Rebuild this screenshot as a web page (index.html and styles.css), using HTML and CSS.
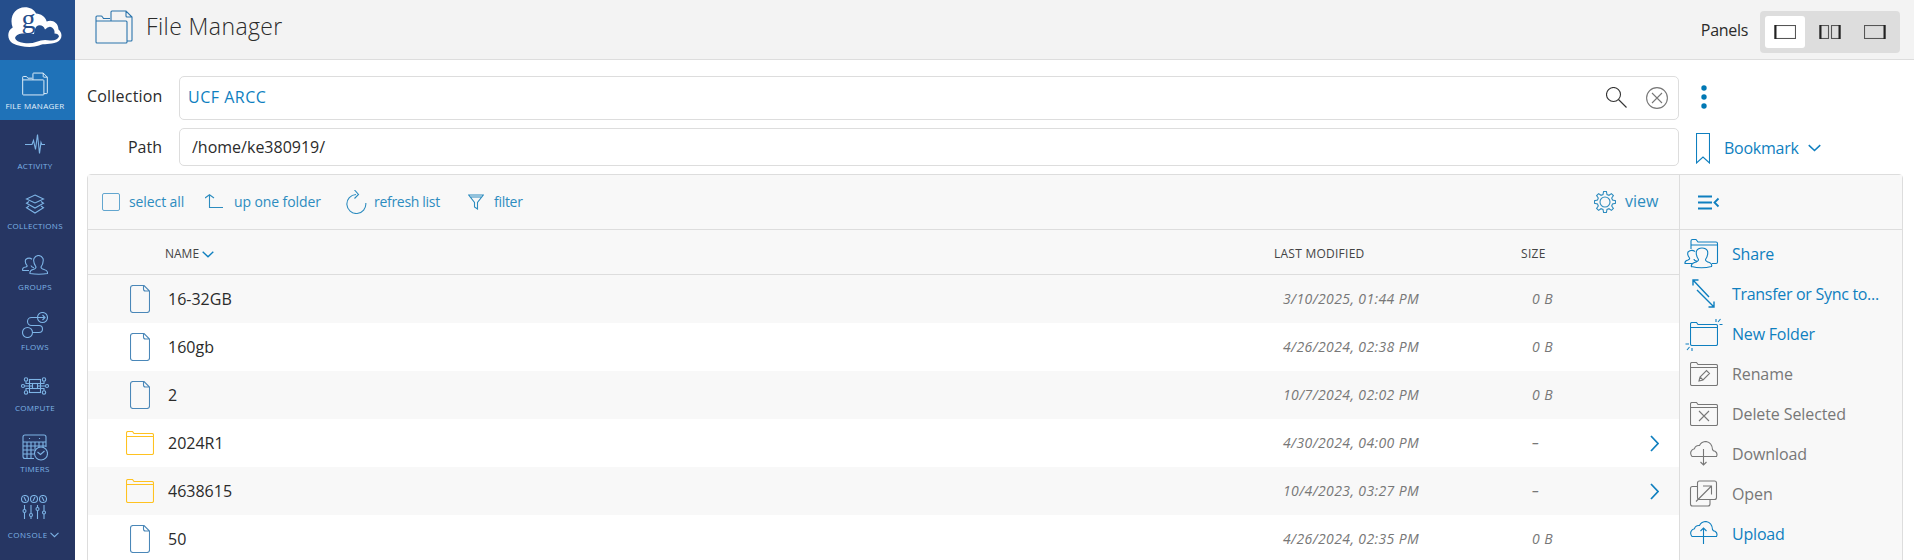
FILE: index.html
```html
<!DOCTYPE html>
<html lang="en">
<head>
  <meta charset="UTF-8">
  <title>File Manager</title>
  <link rel="stylesheet" href="styles.css">
</head>
<body>
  <!-- icon sprite -->
  <svg class="sprite">
    <symbol id="i-files" viewBox="0 0 38 34">
      <path d="M1 11V32q0 1 1 1H31q1 0 1-1V12q0-1-1-1H1V7q0-1 1-1H6q1 0 1.500 1l1 1.500H15M16 11V2q0-1 1-1H31l6 6V30q0 1-1 1H32M31 1V6q0 1 1 1H37"/>
    </symbol>
    <symbol id="i-activity" viewBox="0 0 20 20">
      <path d="M0 10.500H7l1.500-4 2 9 2-15 2 19 1.500-11 .8 2H20"/>
    </symbol>
    <symbol id="i-layers" viewBox="0 0 20 20">
      <path d="M10 1l8.500 4L10 9 1.500 5zM4 7.500l-2.500 1.700L10 14l8.500-4.800L16 7.500M4 12l-2.500 1.700L10 19l8.500-5.300L16 12"/>
    </symbol>
    <symbol id="i-groups" viewBox="0 0 26 20">
      <path d="M8 18.500q-.5-3 3-4 3-.8 3-2.500-3.300-5-2-8.500 1.500-3 4.500-3t4.500 3q1 4-2 8.500 0 1.700 3 2.500 4 1 3.500 4-8.500 1.500-17.500 0zM7 15.500H.7q-.7-3 3-3.500 1.800-.5 1.300-1.500-2.500-3-1.300-6Q7 2 10 4.200M9 10.500q.3 1.700 3 2.200"/>
    </symbol>
    <symbol id="i-flows" viewBox="0 0 26 26">
      <circle cx="5.500" cy="20.500" r="5"/><circle cx="20.500" cy="5.500" r="5"/>
      <path d="M22 5.500H9.500a4 4 0 0 0 0 8H17a3.500 3.500 0 0 1 0 7H10.500M20.500 3l2.500 2.500-2.500 2.500"/>
    </symbol>
    <symbol id="i-compute" viewBox="0 0 28 18">
      <rect x="8.500" y="2.500" width="11" height="13"/><rect x="11.500" y="6.500" width="5" height="5"/>
      <path d="M3.500 9H11M17 9H24.500M5 4.500v2h6M23 4.500v2H17M5 13.500v-2h6M23 13.500v-2H17"/>
      <circle cx="2" cy="9" r="1.500"/><circle cx="26" cy="9" r="1.500"/><circle cx="5" cy="2.500" r="1.700"/><circle cx="23" cy="2.500" r="1.700"/><circle cx="5" cy="15.500" r="1.700"/><circle cx="23" cy="15.500" r="1.700"/>
    </symbol>
    <symbol id="i-timers" viewBox="0 0 26 27">
      <path d="M12 24.500H3Q1 24.500 1 22.500V3Q1 1 3 1H22q2 0 2 2V13M1 8H24M5 8V24M9 8V24M13 8V15M17 8V13M21 8V13M1 12H24M1 16H14M1 20H12M7.500 4v1M17.500 4v1"/>
      <circle cx="19" cy="19.500" r="6.500"/><path d="M15.500 18l3 2.500 4-3.500"/>
    </symbol>
    <symbol id="i-console" viewBox="0 0 26 24">
      <circle cx="4" cy="4" r="3.500"/><circle cx="13" cy="4" r="3.500"/><circle cx="22" cy="4" r="3.500"/>
      <path d="M3 2l2 4M14 2l-2 4M21 2l2 4M3.500 10v4.500M3.500 18v6M10 10v8.500M10 21.500V24M16.500 10v2.500M16.500 15.500V24M23 10v6M23 19v5"/>
      <circle cx="3.500" cy="16" r="1.500"/><circle cx="10" cy="20" r="1.500"/><circle cx="16.500" cy="14" r="1.500"/><circle cx="23" cy="17.500" r="1.500"/>
    </symbol>
    <symbol id="i-down" viewBox="0 0 12 7">
      <path stroke-width="1.400" d="M.7.8L6 5.800 11.300.8"/>
    </symbol>
    <symbol id="i-file" viewBox="0 0 20 28">
      <path d="M14 .5H3Q.5.500.5 3V25q0 2.500 2.500 2.500H17q2.500 0 2.500-2.500V6zM13.500.5V4q0 2 2 2h4"/>
    </symbol>
    <symbol id="i-folder" viewBox="0 0 28 24">
      <path d="M.5 5.500V22q0 1.500 1.500 1.500H26q1.500 0 1.500-1.500V4q0-1.500-1.500-1.500H8L6.500.5H2Q.5.500.5 2V5.500H27.500"/>
    </symbol>
    <symbol id="i-cloud" viewBox="0 0 28 16">
      <path d="M2 15.500Q0 13 1 10.500 2 8 4.500 7.700 5.500 4 9.500 4.500 11.500.5 16 .5q6 1 6.500 8 .5 1.500 2.500 1.700 3 1.800 1.500 5.300z"/>
    </symbol>
  </svg>

  <nav class="sidebar">
    <a class="logo">
      <svg width="56" height="60" viewBox="0 -6 56 60">
        <path class="cloud" d="M4.700 21.500C1 12 6 1.300 17 1.300c5 0 9 2.200 11 6.200C33 8 37 10 38.700 15.500 44 13.500 50 16 50.500 23.500c4 3 4.500 10-1.800 12.700C42 39 36 37 31 39.500 24 42 12 41 5 37.500-1 34-1.500 25 4.700 21.500z"/>
        <path class="hole" d="M7 32q1-4 7-4.500 7-.5 12 .5.500-7 4-8.500 5-1 7 4 4-4 7-2 3 2 2.500 6 4 0 4.500 3Q49 35 42 34.500 35 33 28.700 35.700 23 38 16 37 8 36 7 32z"/>
        <text x="20.500" y="21.500" text-anchor="middle">g</text>
      </svg>
    </a>
    <a class="nav-item active"><span class="nav-icon"><svg width="26" height="24"><use href="#i-files" stroke-width="1.400"/></svg></span>FILE MANAGER</a>
    <a class="nav-item"><span class="nav-icon"><svg width="20" height="20"><use href="#i-activity"/></svg></span>ACTIVITY</a>
    <a class="nav-item"><span class="nav-icon"><svg width="20" height="20"><use href="#i-layers"/></svg></span>COLLECTIONS</a>
    <a class="nav-item"><span class="nav-icon"><svg width="26" height="20"><use href="#i-groups"/></svg></span>GROUPS</a>
    <a class="nav-item"><span class="nav-icon"><svg width="26" height="26"><use href="#i-flows"/></svg></span>FLOWS</a>
    <a class="nav-item"><span class="nav-icon"><svg width="28" height="18"><use href="#i-compute"/></svg></span>COMPUTE</a>
    <a class="nav-item timers"><span class="nav-icon"><svg width="26" height="27"><use href="#i-timers"/></svg></span>TIMERS</a>
    <a class="nav-item console"><span class="nav-icon"><svg width="26" height="24"><use href="#i-console"/></svg></span><span>CONSOLE <svg width="9" height="6"><use href="#i-down"/></svg></span></a>
  </nav>

  <main>
    <header>
      <svg class="title-icon" width="38" height="34"><use href="#i-files"/></svg>
      <h1>File Manager</h1>
      <span class="panels-label">Panels</span>
      <div class="panels">
        <button class="selected"><svg width="22" height="14"><rect x="1" y=".5" width="20.500" height="13"/><path d="M1.500 0V14"/></svg></button>
        <button><svg width="22" height="14"><rect x="1" y=".5" width="8.500" height="13"/><rect x="12.500" y=".5" width="8.500" height="13"/><path d="M1.500 0V14M20.500 0V14"/></svg></button>
        <button><svg width="22" height="14"><rect x=".5" y=".5" width="20.500" height="13"/><path d="M20.500 0V14"/></svg></button>
      </div>
    </header>

    <div class="location">
      <label class="collection-label">Collection</label>
      <div class="field collection">
        <span class="value">UCF ARCC</span>
        <svg class="search" width="21" height="21"><circle cx="7.500" cy="7.500" r="7"/><path d="M12.500 12.500l8 8"/></svg>
        <svg class="clear" width="22" height="22"><circle cx="11" cy="11" r="10.400"/><path d="M6 6l10 10M16 6L6 16"/></svg>
      </div>
      <svg class="dots" width="6" height="24"><circle cx="3" cy="3" r="2.700"/><circle cx="3" cy="12" r="2.700"/><circle cx="3" cy="21" r="2.700"/></svg>
      <label>Path</label>
      <div class="field path">/home/ke380919/</div>
      <a class="bookmark">
        <svg width="14" height="31"><path d="M.5.5h13V30L7 24 .5 30z"/></svg>
        <span>Bookmark</span>
        <svg width="13" height="8"><use href="#i-down"/></svg>
      </a>
    </div>

    <div class="browser">
      <section class="list">
        <div class="toolbar">
          <span class="checkbox"></span><a class="select-all">select all</a>
          <svg class="up" width="18" height="15"><path d="M0 4L4.500.7 9 4M4.500 1V13.500H18"/></svg><a class="up-one">up one folder</a>
          <svg class="refresh" width="21" height="24"><path d="M10 4.500A9.500 9.500 0 1 0 19.800 13M8.500 0l4 4.500-4 4"/></svg><a class="refresh-list">refresh list</a>
          <svg class="funnel" width="16" height="16"><path d="M.7 1H15.300L9.500 8.500V15l-3-2V8.500zM2.500 3H13.500"/></svg><a class="filter">filter</a>
          <svg class="gear" width="22" height="22" viewBox="-11 -11 22 22">
            <circle r="5"/>
            <path d="M-2-7.500L-1.400-10.500H1.400L2-7.500 4-6.700 6.400-8.400 8.400-6.400 6.700-4 7.500-2 10.500-1.400V1.400L7.500 2 6.700 4 8.400 6.400 6.400 8.400 4 6.700 2 7.500 1.400 10.500H-1.400L-2 7.500-4 6.700-6.400 8.400-8.400 6.400-6.700 4-7.500 2-10.500 1.400V-1.400L-7.500-2-6.700-4-8.400-6.400-6.400-8.400-4-6.700z"/>
          </svg>
          <a class="view">view</a>
        </div>
        <div class="row head">
          <span></span>
          <span>NAME <svg width="12" height="7"><use href="#i-down"/></svg></span>
          <span>LAST MODIFIED</span>
          <span>SIZE</span>
        </div>
        <div class="row">
          <svg class="file" width="20" height="28"><use href="#i-file"/></svg>
          <span class="name">16-32GB</span><span class="date">3/10/2025, 01:44 PM</span><span class="size">0 B</span>
        </div>
        <div class="row">
          <svg class="file" width="20" height="28"><use href="#i-file"/></svg>
          <span class="name">160gb</span><span class="date">4/26/2024, 02:38 PM</span><span class="size">0 B</span>
        </div>
        <div class="row">
          <svg class="file" width="20" height="28"><use href="#i-file"/></svg>
          <span class="name">2</span><span class="date">10/7/2024, 02:02 PM</span><span class="size">0 B</span>
        </div>
        <div class="row">
          <svg class="folder" width="28" height="24"><use href="#i-folder"/></svg>
          <span class="name">2024R1</span><span class="date">4/30/2024, 04:00 PM</span><span class="size">–</span>
          <svg class="open" width="9" height="17"><path d="M1 1l7 7.500L1 16"/></svg>
        </div>
        <div class="row">
          <svg class="folder" width="28" height="24"><use href="#i-folder"/></svg>
          <span class="name">4638615</span><span class="date">10/4/2023, 03:27 PM</span><span class="size">–</span>
          <svg class="open" width="9" height="17"><path d="M1 1l7 7.500L1 16"/></svg>
        </div>
        <div class="row">
          <svg class="file" width="20" height="28"><use href="#i-file"/></svg>
          <span class="name">50</span><span class="date">4/26/2024, 02:35 PM</span><span class="size">0 B</span>
        </div>
      </section>

      <aside>
        <div class="collapse">
          <svg width="23" height="15"><path d="M0 1.500H14M0 7.500H14M0 13.500H14M20.500 3.500l-4 4 4 4"/></svg>
        </div>
        <a class="action">
          <svg width="40" height="40"><path d="M8 15V7q0-1.500 1.500-1.500H13L15 8H33q1.500 0 1.500 1.500V28q0 1.500-1.500 1.500H29M8 11H34M8.500 33q-1-3 3-4.500 4-1 4-3-3-4.500-2-8.500 1.500-3 5.500-3t5.500 3q1 4-2 8.500 0 2 4 3 3 1.500 2 4-10 2.500-20 0zM9 29.500H2q-.5-2.700 3-3.500 2-.6 1.500-2-2.500-3-1.500-6 3.500-3 7-.5M11 25q0 1.500 3 2.200"/></svg>
          Share</a>
        <a class="action transfer">
          <svg width="40" height="40"><path d="M26 23L10 6M10 11.500V6h5.500M14 16L31 33M31 27.500V33H25.500"/></svg>
          Transfer or Sync to...</a>
        <a class="action new">
          <svg width="40" height="40"><use href="#i-folder" x="7" y="8" width="28" height="24"/><path d="M33 8V5M35 8l2.500-3M36.500 10.500h3M6 30H2.500M6.500 33L4 36M9 34v3"/></svg>
          New Folder</a>
        <a class="action disabled rename">
          <svg width="40" height="40"><use href="#i-folder" x="7" y="8" width="28" height="24"/><path d="M16 27l1-4 6.500-6.500 3 3L20 26zM17 23l3 3"/></svg>
          Rename</a>
        <a class="action disabled delete">
          <svg width="40" height="40"><use href="#i-folder" x="7" y="8" width="28" height="24"/><path d="M16 17l10 10M26 17L16 27"/></svg>
          Delete Selected</a>
        <a class="action disabled">
          <svg width="40" height="40"><use href="#i-cloud" x="7" y="7" width="28" height="16"/><path d="M20.500 15V31M17.500 28l3 3 3-3"/></svg>
          Download</a>
        <a class="action disabled">
          <svg width="40" height="40"><rect x="14.500" y="7" width="19" height="18.500" rx="2"/><path d="M14 12.500H9.500q-2 0-2 2V30q0 2 2 2H25q2 0 2-2V26M13 27.500L28.500 12M20 12H28.500V20.500"/></svg>
          Open</a>
        <a class="action">
          <svg width="40" height="40"><use href="#i-cloud" x="7" y="7" width="28" height="16"/><path d="M20.500 30V14M17.500 17l3-3 3 3"/></svg>
          Upload</a>
      </aside>
    </div>
  </main>
</body>
</html>
```
FILE: styles.css
```css
* {
  box-sizing: border-box;
}
body {
  display: flex;
  height: 560px;
  margin: 0;
  overflow: hidden;
  background: #fff;
  color: #2b2b2b;
  font-family: "Open Sans", "Noto Sans", sans-serif;
  font-size: 16px;
}
svg {
  flex: none;
  fill: none;
  stroke: currentColor;
  stroke-width: 1.100;
}
.sprite {
  position: absolute;
  width: 0;
  height: 0;
}

/* sidebar */
.sidebar {
  flex: none;
  width: 75px;
  background: #263663;
}
.logo {
  display: block;
  height: 60px;
  padding-left: 8px;
  background: #254e8c;
}
.logo svg {
  stroke: none;
}
.logo .cloud {
  fill: #fff;
}
.logo .hole,
.logo text {
  fill: #254e8c;
}
.logo text {
  font: 28px "Liberation Serif", serif;
}
.nav-item {
  display: flex;
  flex-direction: column;
  align-items: center;
  height: 60.400px;
  padding-right: 5px;
  color: #7db4e6;
  font-size: 8px;
  line-height: 10px;
  letter-spacing: 0.3px;
  white-space: nowrap;
}
.nav-item.active {
  height: 60px;
  background: #1f72b8;
  color: #e4f1fb;
}
.nav-icon {
  display: flex;
  align-items: center;
  height: 30px;
  margin: 9px 0 2px;
}
.timers .nav-icon {
  margin-top: 11px;
  margin-bottom: 1px;
}
.console .nav-icon {
  margin-top: 10px;
  margin-bottom: 8px;
}
.console {
  padding-right: 8px;
  letter-spacing: 0.5px;
}

/* page header */
main {
  flex: 1;
}
header {
  display: flex;
  height: 60px;
  padding: 10px 14px 0 20px;
  border-bottom: 1px solid #ddd;
  background: #f3f3f3;
}
.title-icon {
  color: #2a74ac;
}
h1 {
  flex: 1;
  margin: 0 0 0 13px;
  font-size: 23px;
  font-weight: 300;
  line-height: 32px;
  letter-spacing: 0.4px;
}
.panels-label {
  margin-right: 12px;
  line-height: 41px;
  letter-spacing: -0.3px;
}
.panels {
  display: flex;
  gap: 5px;
  height: 42px;
  margin-top: 1px;
  padding: 5px;
  border-radius: 4px;
  background: #ddd;
}
.panels button {
  display: flex;
  align-items: center;
  justify-content: center;
  width: 40px;
  padding: 0;
  border: 0;
  border-radius: 3px;
  background: none;
  color: #555;
}
.panels .selected {
  background: #fff;
}
.panels path {
  stroke: #222;
  stroke-width: 2;
}

/* collection and path */
.location {
  display: grid;
  grid-template-columns: 75px 1500px 200px;
  grid-template-rows: 44px 38px;
  gap: 8px 17px;
  align-items: center;
  padding: 16px 0 8px 12px;
}
label {
  text-align: right;
}
.collection-label {
  padding-bottom: 4px;
  letter-spacing: 0.2px;
  white-space: nowrap;
}
.field {
  display: flex;
  align-items: center;
  height: 100%;
  border: 1px solid #ddd;
  border-radius: 5px;
}
.collection {
  padding: 0 10px 1px 8px;
  color: #0f7fbf;
}
.value {
  flex: 1;
  padding-bottom: 1px;
  letter-spacing: 0.5px;
}
.search {
  margin-right: 19px;
  color: #333;
}
.clear {
  color: #777;
}
.path {
  padding: 0 0 1px 12px;
}
.dots {
  margin: 0 0 2px 5px;
  fill: #0078b4;
  stroke: none;
}
.bookmark {
  display: flex;
  align-items: center;
  padding-top: 2px;
  color: #0f7fbf;
}
.bookmark span {
  width: 84px;
  margin-left: 14px;
  letter-spacing: -0.25px;
}

/* file list */
.browser {
  display: flex;
  width: 1816px;
  height: 400px;
  margin-left: 12px;
  border: 1px solid #ddd;
  border-radius: 4px 4px 0 0;
}
.list {
  width: 1591px;
}
.toolbar {
  display: flex;
  align-items: center;
  height: 55px;
  padding: 0 0 1px 14px;
  border-bottom: 1px solid #ddd;
  background: #f8f8f8;
  color: #2d8cbf;
  font-size: 14px;
}
.toolbar a {
  padding-bottom: 1px;
}
.checkbox {
  width: 18px;
  height: 18px;
  margin-right: 9px;
  border: 1px solid #62a6cf;
  border-radius: 2px;
}
.select-all {
  width: 76px;
  letter-spacing: -0.1px;
}
.up {
  margin-right: 11px;
}
.up-one {
  width: 112px;
  letter-spacing: -0.1px;
}
.refresh {
  margin-right: 7px;
}
.refresh-list {
  width: 94px;
  letter-spacing: -0.3px;
}
.funnel {
  margin-right: 10px;
}
.filter {
  flex: 1;
  letter-spacing: -0.3px;
}
.gear {
  margin-right: 9px;
}
.view {
  width: 54px;
  font-size: 16px;
}
.row {
  display: grid;
  grid-template-columns: 80px 1115px 249px 119px 9px;
  align-items: center;
  height: 48px;
}
.row:nth-child(even) {
  background: #fff;
}
.row:nth-child(odd) {
  background: #f8f8f8;
}
.row.head {
  height: 45px;
  padding-top: 2px;
  border-bottom: 1px solid #ddd;
  background: #f8f8f8;
  color: #444;
  font-size: 12px;
}
.head svg {
  color: #0f7fbf;
}
.head span:nth-child(2) {
  margin-left: -3px;
}
.head span:nth-child(3) {
  margin-left: -9px;
  letter-spacing: 0.25px;
}
.head span:nth-child(4) {
  margin-left: -11px;
  letter-spacing: 0.3px;
}
.file {
  margin-left: 42px;
  color: #4a87b8;
}
.folder {
  margin-left: 38px;
  color: #ffc220;
}
.name {
  padding-bottom: 1px;
}
.date,
.size {
  padding-bottom: 2px;
  color: #777;
  font-size: 14px;
  font-style: italic;
  letter-spacing: 0.4px;
}
.open {
  margin-left: -1px;
  color: #0f7fbf;
  stroke-width: 1.700;
}

/* actions panel */
aside {
  flex: 1;
  border-left: 1px solid #ddd;
  background: #f8f8f8;
  color: #0f7fbf;
}
.collapse {
  display: flex;
  align-items: center;
  height: 55px;
  margin-bottom: 4px;
  padding-left: 18px;
  border-bottom: 1px solid #ddd;
}
.collapse svg {
  stroke-width: 1.800;
}
.action {
  display: flex;
  align-items: center;
  gap: 9px;
  height: 40px;
  padding: 0 0 1px 3px;
  letter-spacing: -0.2px;
  white-space: nowrap;
}
.transfer {
  letter-spacing: -0.3px;
}
.transfer svg {
  stroke-width: 1.400;
}
.disabled {
  color: #777;
  letter-spacing: -0.1px;
}
```
